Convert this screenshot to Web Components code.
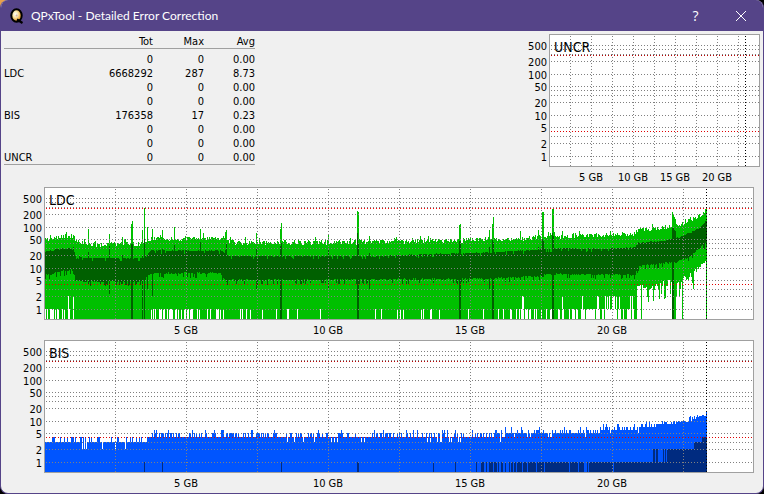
<!DOCTYPE html>
<html lang="en">
<head>
<meta charset="utf-8">
<title>QPxTool - Detailed Error Correction</title>
<style>
  body {
    margin: 0;
    background: linear-gradient(135deg, #e8a04c 0, #e8a04c 6px, #000 30px);
    font-family: 'DejaVu Sans Condensed', Tahoma, sans-serif;
    font-size: 11px;
    color: #000;
  }
  .summary {
    display: flex;
    justify-content: space-between;
    align-items: flex-start;
  }
  .summary qpx-chart {
    flex: 0 1 251px;
  }
  .wide {
    margin-right: 6px;
  }
</style>
</head>
<body>
<qpx-window caption="QPxTool - Detailed Error Correction">
  <div class="summary">
    <qpx-totals></qpx-totals>
    <qpx-chart label="UNCR"></qpx-chart>
  </div>
  <qpx-chart class="wide" label="LDC"></qpx-chart>
  <qpx-chart class="wide" label="BIS"></qpx-chart>
</qpx-window>

<script>
// Window frame
class QpxWindow extends HTMLElement {
  constructor() {
    super();
    this.attachShadow({ mode: 'open' });
  }

  connectedCallback() {
    this.shadowRoot.innerHTML = `
      <style>
        :host {
          display: flex;
          flex-direction: column;
          box-sizing: border-box;
          min-height: 100vh;
          border: 1px solid #554488;
          border-top: 0;
          border-radius: 8px;
          overflow: hidden;
          background: #f0f0f0;
        }

        header {
          display: flex;
          align-items: center;
          height: 31px;
          padding-left: 8px;
          background: #554488;
          color: #fff;
        }

        h1 {
          flex: 1;
          margin: 0 0 0 6px;
          font: 12px Lato, 'Segoe UI', sans-serif;
        }

        button {
          display: flex;
          align-items: center;
          justify-content: center;
          width: 45px;
          height: 31px;
          padding: 0;
          border: 0;
          background: none;
          color: #fff;
          font: 14px 'Open Sans', 'Segoe UI', sans-serif;
        }

        main {
          padding: 3px 3px 0;
        }
      </style>
      <header>
        <svg width="16" height="16" viewBox="0 0 16 16" aria-hidden="true">
          <defs>
            <radialGradient id="disc" cx="0.4" cy="0.4">
              <stop offset="0" stop-color="#fff"/>
              <stop offset="0.5" stop-color="#fbe6a8"/>
              <stop offset="1" stop-color="#eda53c"/>
            </radialGradient>
          </defs>
          <ellipse cx="7.5" cy="7.5" rx="5.2" ry="6.2" fill="url(#disc)" stroke="#000" stroke-width="2"/>
          <circle cx="7.6" cy="7.6" r="1" fill="#d8b0b0"/>
          <path d="M8 11.5L13.5 15" stroke="#000" stroke-width="2.2"/>
        </svg>
        <h1>${this.getAttribute('caption')}</h1>
        <button type="button" aria-label="Help">?</button>
        <button type="button" aria-label="Close">
          <svg width="10" height="10" viewBox="0 0 10 10"><path d="M0 0L10 10M10 0L0 10" stroke="#fff"/></svg>
        </button>
      </header>
      <main><slot></slot></main>
    `;
  }
}

// Error totals
class QpxTotals extends HTMLElement {
  constructor() {
    super();
    this.attachShadow({ mode: 'open' });
  }

  connectedCallback() {
    const rows = [
      ['', '0', '0', '0.00'],
      ['LDC', '6668292', '287', '8.73'],
      ['', '0', '0', '0.00'],
      ['', '0', '0', '0.00'],
      ['BIS', '176358', '17', '0.23'],
      ['', '0', '0', '0.00'],
      ['', '0', '0', '0.00'],
      ['UNCR', '0', '0', '0.00']
    ];

    this.shadowRoot.innerHTML = `
      <style>
        :host {
          display: block;
          width: 251px;
        }

        table {
          width: 100%;
          border-collapse: collapse;
          line-height: 12px;
          border-bottom: 1px solid #a0a0a0;
        }

        th, td {
          padding: 2px 0 0;
          height: 12px;
          font-weight: normal;
          text-align: right;
        }

        thead {
          border-bottom: 1px solid #a0a0a0;
        }

        tbody::before {
          content: '';
          display: block;
          height: 3px;
        }

        tbody th {
          text-align: left;
        }

        .name {
          width: 89px;
        }

        .tot {
          width: 60px;
        }

        .max, .avg {
          width: 51px;
        }
      </style>
      <table>
        <thead>
          <tr><td class="name"></td><th class="tot">Tot</th><th class="max">Max</th><th class="avg">Avg</th></tr>
        </thead>
        <tbody>
          ${rows.map(([name, ...cells]) => `<tr><th>${name}</th>${cells.map(c => `<td>${c}</td>`).join('')}</tr>`).join('')}
        </tbody>
      </table>
    `;
  }
}

// Disc scan samples. Curves are [column, value] points, a column is 1/710 of 25 GB.
const COLUMNS = 710;
const SCANNED = 662;

const LDC = {
  max: [[1, 47], [15, 56], [29, 60], [32, 45], [40, 40], [50, 37], [65, 37], [100, 38], [107, 50], [180, 53], [183, 43], [200, 41], [300, 42], [345, 43], [390, 46], [440, 48], [480, 51], [510, 57], [535, 60], [590, 68], [595, 84], [612, 92], [634, 106], [646, 140], [655, 180], [662, 250]],
  top: [[1, 24], [14, 28], [29, 30], [31, 20], [40, 17], [98, 17], [106, 26], [178, 26], [184, 19], [340, 19], [380, 21], [440, 23], [480, 26], [520, 30], [560, 28], [591, 31], [594, 40], [620, 45], [634, 54], [646, 71], [655, 93], [662, 140]],
  low: [[1, 6.5], [15, 8], [29, 9], [31, 5], [50, 4.6], [98, 4.8], [106, 7.3], [176, 7.5], [181, 5], [440, 5.4], [480, 6], [510, 7], [591, 6.8], [594, 11], [632, 14], [645, 18], [655, 30], [662, 40]],
  // column, max, top, low
  spikes: [
    [44, 89, 24, 4], [65, 67, 34, 2.2], [78, 54, 20, 4], [87, 115, 38, 0], [88, 140, 38, 0], [98, 80, 20, 0],
    [100, 290, 50, 0], [103, 100, 20, 3], [108, 89, 26, 2], [118, 80, 28, 6], [130, 100, 35, 7], [156, 85, 42, 7],
    [181, 75, 27, 5], [182, 80, 38, 4.5], [212, 71, 28, 3], [236, 88, 34, 0], [237, 125, 40, 0], [284, 66, 28, 3],
    [313, 245, 70, 0], [314, 230, 40, 0], [325, 60, 22, 3], [415, 107, 44, 0], [416, 112, 44, 0], [445, 80, 32, 3],
    [448, 115, 48, 0], [449, 175, 43, 0], [476, 78, 26, 5], [494, 80, 32, 6], [498, 225, 49, 6], [499, 230, 44, 6],
    [508, 270, 70, 0], [509, 287, 60, 0], [628, 230, 90, 0], [629, 190, 94, 0], [630, 170, 84, 14], [631, 150, 78, 13]
  ],
  // share of columns whose minimum reaches one error, by range
  gaps: [[1, 33, .5], [33, 107, .01], [107, 182, .5], [182, 475, .12], [475, 525, .4], [525, 593, .7]]
};

const BIS = {
  max: [[1, 3], [99, 3], [105, 4], [400, 4.1], [440, 4.6], [500, 5.2], [545, 5.6], [590, 6.5], [615, 7.8], [640, 9], [650, 11.5], [662, 14]]
};

function seeded(seed) {
  return () => {
    seed = (seed * 1664525 + 1013904223) % 4294967296;
    return seed / 4294967296;
  };
}

// Interpolates on the log scale
function curve(points, x) {
  const next = points.findIndex(p => p[0] >= x);
  if (next < 1) {
    return points[next === 0 ? 0 : points.length - 1][1];
  }
  const [x0, v0] = points[next - 1];
  const [x1, v1] = points[next];
  return v0 * Math.pow(v1 / v0, (x - x0) / (x1 - x0));
}

function ldcBars() {
  const random = seeded(7);
  const bars = [];
  for (let x = 1; x <= SCANNED; x++) {
    const burst = random() < .12 ? 1.2 : 1;
    let max = curve(LDC.max, x) * (.86 + random() * .26) * burst;
    let top = curve(LDC.top, x) * (.97 + random() * .06);
    let low = curve(LDC.low, x) * (.93 + random() * .1);
    if (random() < .2) {
      low *= .8;
    }
    if (random() < .1 && x < 594) {
      top *= .85;
    }
    let min = 0;
    const gap = LDC.gaps.find(g => x >= g[0] && x < g[1]);
    if (gap && random() < gap[2]) {
      min = 1;
      if (x > 15 && x < 33 && random() < .25 || x > 475 && random() < .25 || x > 550 && random() < .6) {
        min = 2;
      }
    }
    if (x >= 593) {
      min = curve([[593, 3.6], [612, 3.7], [632, 5], [645, 6], [655, 11], [662, 15]], x) * (.75 + random() * .4);
      if (random() < .18 && x < 650) {
        min *= .5;
      }
      if ([597, 628, 629, 638, 662].includes(x)) {
        min = 0;
      }
    }
    const spike = LDC.spikes.find(s => s[0] === x);
    if (spike) {
      [, max, top, low] = spike;
      min = 0;
    }
    bars.push([x, Math.min(max, 290), min, '#00c000'], [x, top, Math.max(low, min), '#006000']);
  }
  return bars;
}

function bisBars() {
  const random = seeded(21);
  const bars = [];
  for (let x = 1; x <= SCANNED; x++) {
    let max = Math.floor(curve(BIS.max, x) + .2);
    const roll = random();
    if (roll < .08 && (x > 25 && x < 85 || x > 225)) {
      max -= 1;
    } else if (roll > .92 && x > 100) {
      max += 2;
    } else if (roll > .62) {
      max += 1;
    }
    // readings wander further towards the edge of the disc
    if (x > 590 && random() < .4) {
      max += 1;
    }
    bars.push([x, max, 0, '#0055ff']);

    let avg = 0;
    const density = x < 410 ? 0 : curve([[410, .15], [450, .45], [480, .75], [520, .85], [575, .96], [580, 1]], x);
    if (random() < density || [100, 118, 237, 313, 314, 389].includes(x)) {
      avg = 1;
    }
    if (x > 608 && random() < .4 || x > 624 && x !== 638) {
      avg = 2;
    }
    if (x > 649) {
      avg = 3;
    }
    if (x > 657) {
      avg = 4;
    }
    if (avg) {
      bars.push([x, avg, 0, '#002b80']);
    }
  }
  return bars;
}

const SAMPLES = { LDC: ldcBars(), BIS: bisBars(), UNCR: [] };

// Log scale chart
class QpxChart extends HTMLElement {
  constructor() {
    super();
    this.attachShadow({ mode: 'open' });
  }

  connectedCallback() {
    this.shadowRoot.innerHTML = `
      <style>
        :host {
          display: block;
          min-width: 0;
        }

        svg {
          display: block;
          width: 100%;
          height: 153px;
        }

        text {
          fill: #000;
        }

        .label {
          font-size: 14px;
        }
      </style>
      <svg role="img" aria-label="${this.getAttribute('label')}"></svg>
    `;
    this.draw();
    this.observer = new ResizeObserver(() => this.draw());
    this.observer.observe(this);
  }

  disconnectedCallback() {
    this.observer.disconnect();
  }

  draw() {
    const label = this.getAttribute('label');
    const svg = this.shadowRoot.querySelector('svg');
    const gutter = 40;
    const bottom = 132;
    const right = Math.round(this.clientWidth);
    const width = right - gutter;
    const yOf = v => v > 0 ? Math.floor(122 - 41 * Math.log10(v)) : bottom;
    const xOf = gb => gutter + Math.floor(gb * width / 25);
    let out = `<rect x="${gutter}" y="0" width="${width}" height="133" fill="#fff"/>`;

    // samples, one path for each colour
    const paths = {};
    SAMPLES[label].forEach(([col, high, low, color]) => {
      const x = gutter + Math.round(col * width / COLUMNS);
      const y = yOf(high);
      paths[color] = (paths[color] || '') + `M${x} ${y}h1V${yOf(low)}h-1z`;
    });
    for (const color in paths) {
      out += `<path d="${paths[color]}" fill="${color}" shape-rendering="crispEdges"/>`;
    }

    // grid
    const row = (y, color) => `<path d="M${gutter + 2} ${y + .5}H${right - 1}" stroke="${color}" stroke-dasharray="1 2"/>`;
    const column = (x, color) => `<path d="M${x + .5} 2V${bottom}" stroke="${color}" stroke-dasharray="1 2"/>`;
    [1, 2, 3, 5, 10, 20, 30, 40, 50, 100, 200, 300, 400, 500].forEach(v => {
      out += row(yOf(v), '#808080');
    });
    for (let gb = 2.5; gb < 25; gb += 2.5) {
      out += column(xOf(gb), '#808080');
    }
    out += row(21, label === 'LDC' ? '#ff0000' : '#c00000') + row(97, '#e00000');
    out += column(xOf(23.31), '#000');
    out += `<rect x="${gutter + .5}" y="0.5" width="${width - 1}" height="132" fill="none" stroke="#a0a0a0"/>`;

    // axis texts
    [1, 2, 5, 10, 20, 50, 100, 200, 500].forEach(v => {
      out += `<text x="${gutter - 2}" y="${yOf(v) + 5}" text-anchor="end">${v}</text>`;
    });
    [5, 10, 15, 20].forEach(gb => {
      out += `<text x="${xOf(gb)}" y="147" text-anchor="middle">${gb} GB</text>`;
    });
    out += `<text class="label" x="${gutter + 5}" y="18">${label}</text>`;
    svg.innerHTML = out;
  }
}

customElements.define('qpx-window', QpxWindow);
customElements.define('qpx-totals', QpxTotals);
customElements.define('qpx-chart', QpxChart);
</script>
</body>
</html>
